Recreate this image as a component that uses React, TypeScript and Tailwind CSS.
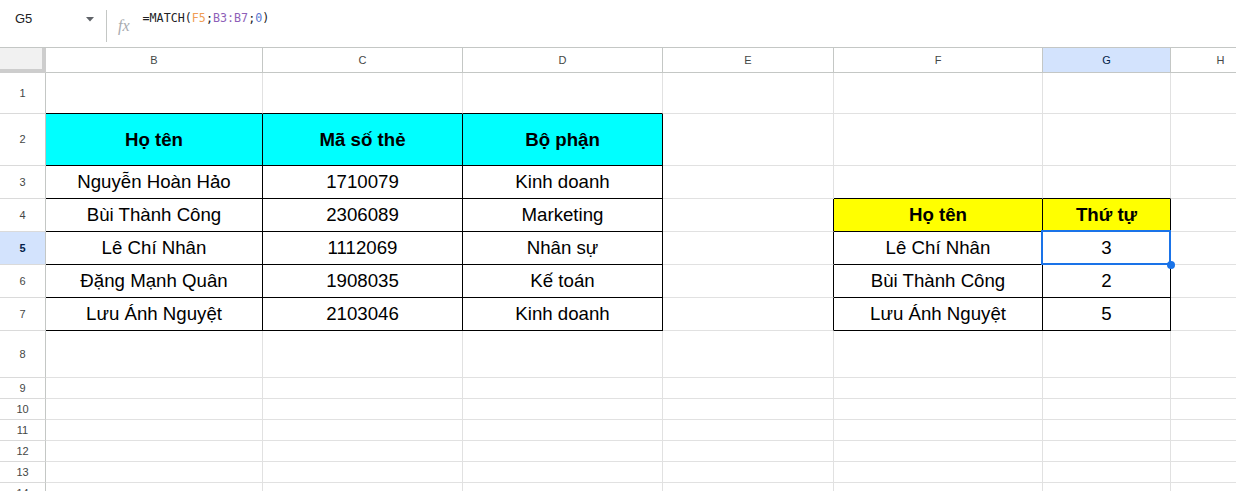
import React from 'react';

const COLS = ['B', 'C', 'D', 'E', 'F', 'G', 'H'];
const ROW_COUNT = 14;

const CELLS: Record<string, string> = {
  B2: 'Họ tên',
  C2: 'Mã số thẻ',
  D2: 'Bộ phận',
  B3: 'Nguyễn Hoàn Hảo',
  C3: '1710079',
  D3: 'Kinh doanh',
  B4: 'Bùi Thành Công',
  C4: '2306089',
  D4: 'Marketing',
  B5: 'Lê Chí Nhân',
  C5: '1112069',
  D5: 'Nhân sự',
  B6: 'Đặng Mạnh Quân',
  C6: '1908035',
  D6: 'Kế toán',
  B7: 'Lưu Ánh Nguyệt',
  C7: '2103046',
  D7: 'Kinh doanh',
  F4: 'Họ tên',
  G4: 'Thứ tự',
  F5: 'Lê Chí Nhân',
  G5: '3',
  F6: 'Bùi Thành Công',
  G6: '2',
  F7: 'Lưu Ánh Nguyệt',
  G7: '5',
};

const CYAN = ['B2', 'C2', 'D2'];
const YELLOW = ['F4', 'G4'];

function FormulaBar() {
  return (
    <div className="flex h-[48px] items-start border-b border-[#c4c7c5] bg-white">
      <div className="flex w-[106px] items-center pl-[15px] pr-[12px] pt-[9px] text-[13px] text-[#202124]">
        <span className="flex-1">G5</span>
        <svg width="8" height="5" viewBox="0 0 8 5" className="mt-px">
          <path d="M0 0 L8 0 L4 4.5 Z" fill="#5f6368" />
        </svg>
      </div>
      <div className="mt-[10px] h-[32px] w-px bg-[#c4c7c5]" />
      <div className="ml-[11px] mt-[18px] font-['Liberation_Serif',serif] text-[16px] italic leading-none text-[#a8abaf]">
        fx
      </div>
      <div className="ml-[13px] mt-[10px] font-['DejaVu_Sans_Mono','Liberation_Mono',monospace] text-[11.7px] text-[#202124]">
        =MATCH(<span className="text-[#f09d55]">F5</span>;<span className="text-[#8e5fb8]">B3:B7</span>;<span className="text-[#5a76d0]">0</span>)
      </div>
    </div>
  );
}

export default function App() {
  const cells: React.ReactNode[] = [];

  // header row
  cells.push(
    <div key="corner" className="border-r-[4px] border-b-[4px] border-[#cdcdcd] bg-[#f1f1f1]" />
  );
  COLS.forEach((c) => {
    const sel = c === 'G';
    cells.push(
      <div
        key={`h${c}`}
        className={`flex items-center justify-center border-r border-b border-[#c4c7c5] text-[11px] ${sel ? 'bg-[#d3e3fd] text-[#041e49]' : 'bg-white text-[#444746]'}`}
      >
        {c}
      </div>
    );
  });

  for (let r = 1; r <= ROW_COUNT; r++) {
    const sel = r === 5;
    cells.push(
      <div
        key={`r${r}`}
        className={`flex items-center justify-center border-r border-b border-r-[#c4c7c5] border-b-[#dadada] text-[11px] ${sel ? 'bg-[#d3e3fd] font-bold text-[#041e49]' : 'bg-white text-[#444746]'}`}
      >
        {r}
      </div>
    );
    COLS.forEach((c, ci) => {
      const id = `${c}${r}`;
      const inT1 = ci <= 2;
      const inT2 = ci === 4 || ci === 5;
      const rightBlack = (inT1 && r >= 2 && r <= 7) || (ci >= 3 && ci <= 5 && r >= 4 && r <= 7);
      const bottomBlack = (inT1 && r >= 1 && r <= 7) || (inT2 && r >= 3 && r <= 7);
      const bold = CYAN.includes(id) || YELLOW.includes(id);
      const bg = CYAN.includes(id) ? 'bg-[#00ffff]' : YELLOW.includes(id) ? 'bg-[#ffff00]' : 'bg-white';
      cells.push(
        <div
          key={id}
          className={`relative flex items-center justify-center whitespace-nowrap border-r border-b text-[18.67px] text-black ${rightBlack ? 'border-r-black' : 'border-r-[#e1e1e1]'} ${bottomBlack ? 'border-b-black' : 'border-b-[#e1e1e1]'} ${bg} ${bold ? 'font-bold' : ''}`}
        >
          {CELLS[id] ?? ''}
          {id === 'G5' && (
            <>
              <div className="absolute -left-[2px] -top-[2px] -right-[1px] -bottom-[1px] z-10 border-2 border-[#1a73e8]" />
              <div className="absolute -right-[5px] -bottom-[5px] z-20 h-2 w-2 rounded-full bg-[#1a73e8]" />
            </>
          )}
        </div>
      );
    });
  }

  return (
    <div className="h-[491px] w-[1236px] overflow-hidden bg-white font-['Liberation_Sans',Arial,sans-serif]">
      <FormulaBar />
      <div className="grid w-max grid-cols-[46px_217px_200px_200px_171px_209px_128px_100px] grid-rows-[25px_41px_52px_33px_33px_33px_33px_33px_47px_21px_21px_21px_21px_21px_21px]">
        {cells}
      </div>
    </div>
  );
}
